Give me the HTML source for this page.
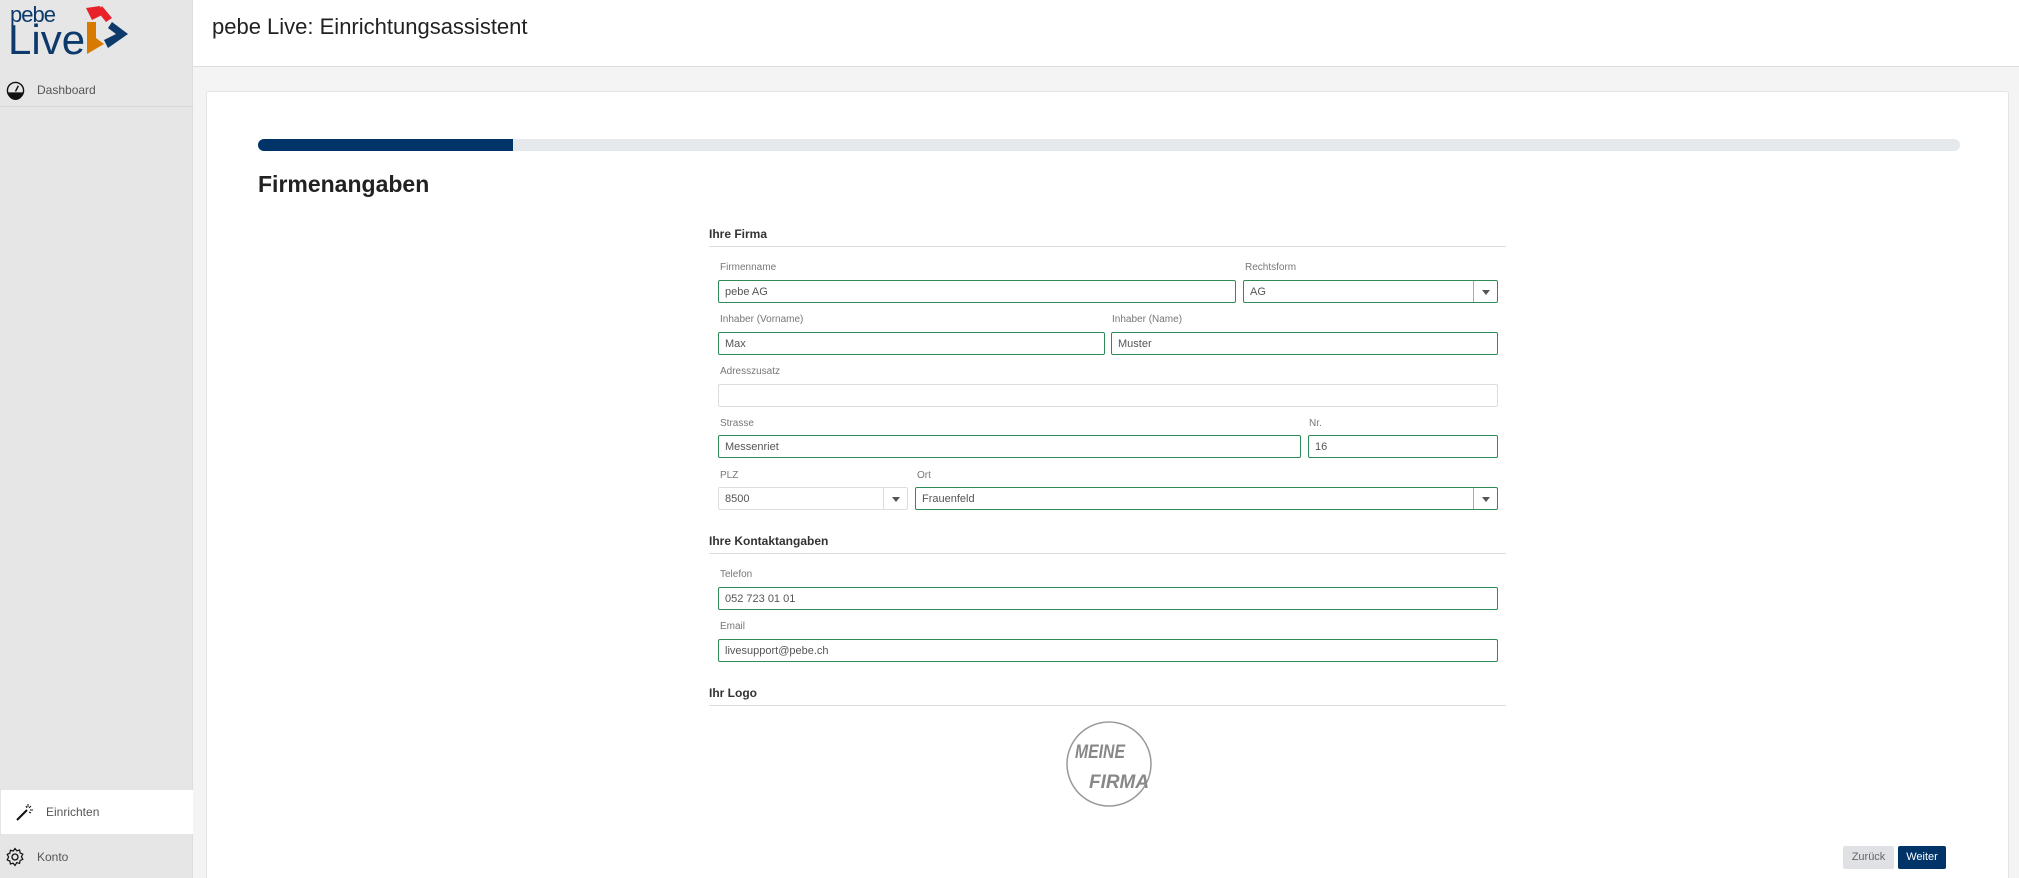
<!DOCTYPE html>
<html style="width:2019px;height:878px;overflow:hidden"><head><meta charset="utf-8"><style>
*{box-sizing:border-box;margin:0;padding:0}
body{width:2019px;height:878px;overflow:hidden;background:#f4f4f4;font-family:"Liberation Sans",sans-serif;position:relative;color:#222}
.side{position:absolute;left:0;top:0;width:193px;height:878px;background:#e6e6e6;border-right:1px solid #ddd}
.hdr{position:absolute;left:193px;top:0;right:0;height:67px;background:#fff;border-bottom:1px solid #ddd}
.hdr span{position:absolute;left:19px;top:14px;font-size:22px;color:#222}
.card{position:absolute;left:206px;top:91px;width:1803px;height:787px;background:#fff;border:1px solid #e3e3e3;border-bottom:none;border-radius:3px 3px 0 0}
.abs{position:absolute}
.lbl{position:absolute;font-size:10px;color:#777}
.in{position:absolute;height:23px;border:1.5px solid #2e8b57;border-radius:2px;font-size:11px;color:#555;padding:5px 6px;background:#fff}
.gray{border:1px solid #ddd}
.dd{position:absolute;right:0;top:0;bottom:0;width:24px;border-left:1px solid #aaa}
.dd:after{content:"";position:absolute;left:8px;top:9px;border-left:4px solid transparent;border-right:4px solid transparent;border-top:5px solid #555}
.sec{position:absolute;left:709px;width:797px;font-size:12px;font-weight:bold;color:#333;border-bottom:1.5px solid #ddd;padding-bottom:5px}
.nav{position:absolute;left:0;width:193px;font-size:12px;color:#555}
</style></head><body>
<div class="side">
  <div class="abs" style="left:10px;top:2px;font-size:22px;color:#0d3a6a;letter-spacing:-1px">pebe</div>
  <div class="abs" style="left:8px;top:16px;font-size:42px;color:#0d3a6a;font-weight:300">Live</div>
  <svg class="abs" style="left:84px;top:4px" width="48" height="54" viewBox="0 0 48 54">
    <path d="M2 4 L16 2 L20 10 L8 16 Z" fill="#e8202a"/>
    <path d="M18 2 L28 14 L22 18 L14 8 Z" fill="#e8202a"/>
    <path d="M3 18 L12 18 L12 34 L20 40 L3 50 Z" fill="#d97a00"/>
    <path d="M28 18 L44 30 L24 44 L20 36 L32 30 L24 24 Z" fill="#0d3a6a"/>
  </svg>
  <div class="nav" style="top:73px;height:34px;border-bottom:1px solid #d8d8d8">
    <svg class="abs" style="left:6px;top:8px" width="19" height="19" viewBox="0 0 20 20"><circle cx="10" cy="10" r="8.5" fill="none" stroke="#111" stroke-width="1.5"/><path d="M2 12 H18 A8 8 0 0 1 2 12Z" fill="#111"/><path d="M10 11 L13 5" stroke="#111" stroke-width="1.5"/></svg>
    <span class="abs" style="left:37px;top:10px">Dashboard</span>
  </div>
  <div class="nav" style="top:790px;height:44px;background:#fff;left:1px;width:192px">
    <svg class="abs" style="left:14px;top:12px" width="20" height="20" viewBox="0 0 20 20"><path d="M2 18 L12 8" stroke="#111" stroke-width="2"/><path d="M13 2v3M16 4l-2 2M18 8h-3M11 4l1 2M16 11l-2-1" stroke="#111" stroke-width="1"/></svg>
    <span class="abs" style="left:45px;top:15px">Einrichten</span>
  </div>
  <div class="nav" style="top:846px;height:24px">
    <svg class="abs" style="left:5px;top:1px" width="20" height="20" viewBox="0 0 20 20"><circle cx="10" cy="10" r="3" fill="none" stroke="#111" stroke-width="1.3"/><path d="M10 1.5l1.8 2.3 2.8-.8.5 2.9 2.7 1.2-1.4 2.6 1.4 2.6-2.7 1.2-.5 2.9-2.8-.8L10 18.5l-1.8-2.3-2.8.8-.5-2.9-2.7-1.2L3.6 10 2.2 7.4l2.7-1.2.5-2.9 2.8.8Z" fill="none" stroke="#111" stroke-width="1.2"/></svg>
    <span class="abs" style="left:37px;top:4px">Konto</span>
  </div>
</div>
<div class="hdr"><span>pebe Live: Einrichtungsassistent</span></div>
<div class="card"></div>
<div class="abs" style="left:258px;top:139px;width:1702px;height:12px;background:#e6e9ec;border-radius:6px"></div>
<div class="abs" style="left:258px;top:139px;width:255px;height:12px;background:#003469;border-radius:6px 0 0 6px"></div>
<div class="abs" style="left:258px;top:171px;font-size:23px;font-weight:bold;color:#222">Firmenangaben</div>

<div class="sec" style="top:227px">Ihre Firma</div>
<div class="lbl" style="left:720px;top:262px">Firmenname</div>
<div class="lbl" style="left:1245px;top:262px">Rechtsform</div>
<div class="in" style="left:718px;top:280px;width:518px">pebe AG</div>
<div class="in" style="left:1243px;top:280px;width:255px">AG<div class="dd"></div></div>
<div class="lbl" style="left:720px;top:314px">Inhaber (Vorname)</div>
<div class="lbl" style="left:1112px;top:314px">Inhaber (Name)</div>
<div class="in" style="left:718px;top:332px;width:387px">Max</div>
<div class="in" style="left:1111px;top:332px;width:387px">Muster</div>
<div class="lbl" style="left:720px;top:366px">Adresszusatz</div>
<div class="in gray" style="left:718px;top:384px;width:780px"></div>
<div class="lbl" style="left:720px;top:418px">Strasse</div>
<div class="lbl" style="left:1309px;top:418px">Nr.</div>
<div class="in" style="left:718px;top:435px;width:583px">Messenriet</div>
<div class="in" style="left:1308px;top:435px;width:190px">16</div>
<div class="lbl" style="left:720px;top:470px">PLZ</div>
<div class="lbl" style="left:917px;top:470px">Ort</div>
<div class="in gray" style="left:718px;top:487px;width:190px">8500<div class="dd" style="border-left-color:#ddd"></div></div>
<div class="in" style="left:915px;top:487px;width:583px">Frauenfeld<div class="dd"></div></div>

<div class="sec" style="top:534px">Ihre Kontaktangaben</div>
<div class="lbl" style="left:720px;top:569px">Telefon</div>
<div class="in" style="left:718px;top:587px;width:780px">052 723 01 01</div>
<div class="lbl" style="left:720px;top:621px">Email</div>
<div class="in" style="left:718px;top:639px;width:780px">livesupport@pebe.ch</div>

<div class="sec" style="top:686px">Ihr Logo</div>
<svg class="abs" style="left:1063px;top:718px" width="95" height="92" viewBox="0 0 95 92">
  <circle cx="46" cy="46" r="42" fill="none" stroke="#999" stroke-width="1.5"/>
  <text x="12" y="40" font-family="Liberation Sans Narrow,Liberation Sans" font-style="italic" font-weight="bold" font-size="19" fill="#888" textLength="50" lengthAdjust="spacingAndGlyphs">MEINE</text>
  <text x="26" y="70" font-family="Liberation Sans Narrow,Liberation Sans" font-style="italic" font-weight="bold" font-size="19" fill="#888" textLength="60" lengthAdjust="spacingAndGlyphs">FIRMA</text>
</svg>
<div class="abs" style="left:1843px;top:846px;width:51px;height:23px;background:#dfe1e4;border-radius:2px;font-size:11px;color:#666;text-align:center;line-height:23px">Zurück</div>
<div class="abs" style="left:1898px;top:846px;width:48px;height:23px;background:#003469;border-radius:2px;font-size:11px;color:#fff;text-align:center;line-height:23px">Weiter</div>
</body></html>
